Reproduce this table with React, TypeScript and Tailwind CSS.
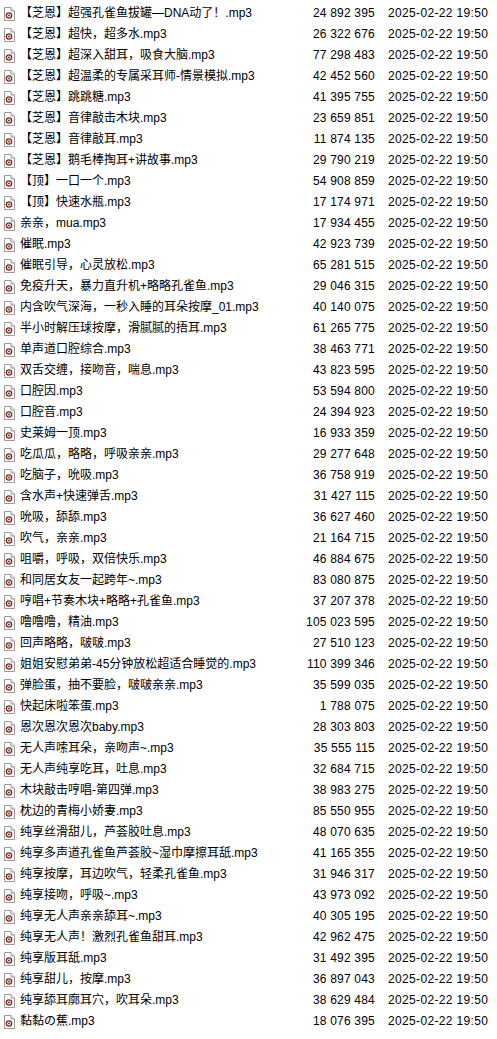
import React from "react";

const files: [string, string][] = [
  ["【芝恩】超强孔雀鱼拔罐—DNA动了！.mp3", "24 892 395"],
  ["【芝恩】超快，超多水.mp3", "26 322 676"],
  ["【芝恩】超深入甜耳，吸食大脑.mp3", "77 298 483"],
  ["【芝恩】超温柔的专属采耳师-情景模拟.mp3", "42 452 560"],
  ["【芝恩】跳跳糖.mp3", "41 395 755"],
  ["【芝恩】音律敲击木块.mp3", "23 659 851"],
  ["【芝恩】音律敲耳.mp3", "11 874 135"],
  ["【芝恩】鹅毛棒掏耳+讲故事.mp3", "29 790 219"],
  ["【顶】一口一个.mp3", "54 908 859"],
  ["【顶】快速水瓶.mp3", "17 174 971"],
  ["亲亲，mua.mp3", "17 934 455"],
  ["催眠.mp3", "42 923 739"],
  ["催眠引导，心灵放松.mp3", "65 281 515"],
  ["免疫升天，暴力直升机+略略孔雀鱼.mp3", "29 046 315"],
  ["内含吹气深海，一秒入睡的耳朵按摩_01.mp3", "40 140 075"],
  ["半小时解压球按摩，滑腻腻的捂耳.mp3", "61 265 775"],
  ["单声道口腔综合.mp3", "38 463 771"],
  ["双舌交缠，接吻音，喘息.mp3", "43 823 595"],
  ["口腔因.mp3", "53 594 800"],
  ["口腔音.mp3", "24 394 923"],
  ["史莱姆一顶.mp3", "16 933 359"],
  ["吃瓜瓜，略略，呼吸亲亲.mp3", "29 277 648"],
  ["吃脑子，吮吸.mp3", "36 758 919"],
  ["含水声+快速弹舌.mp3", "31 427 115"],
  ["吮吸，舔舔.mp3", "36 627 460"],
  ["吹气，亲亲.mp3", "21 164 715"],
  ["咀嚼，呼吸，双倍快乐.mp3", "46 884 675"],
  ["和同居女友一起跨年~.mp3", "83 080 875"],
  ["哼唱+节奏木块+略略+孔雀鱼.mp3", "37 207 378"],
  ["噜噜噜，精油.mp3", "105 023 595"],
  ["回声略略，啵啵.mp3", "27 510 123"],
  ["姐姐安慰弟弟-45分钟放松超适合睡觉的.mp3", "110 399 346"],
  ["弹脸蛋，抽不要脸，啵啵亲亲.mp3", "35 599 035"],
  ["快起床啦笨蛋.mp3", "1 788 075"],
  ["恩次恩次恩次baby.mp3", "28 303 803"],
  ["无人声嗦耳朵，亲吻声~.mp3", "35 555 115"],
  ["无人声纯享吃耳，吐息.mp3", "32 684 715"],
  ["木块敲击哼唱-第四弹.mp3", "38 983 275"],
  ["枕边的青梅小娇妻.mp3", "85 550 955"],
  ["纯享丝滑甜儿，芦荟胶吐息.mp3", "48 070 635"],
  ["纯享多声道孔雀鱼芦荟胶~湿巾摩擦耳舐.mp3", "41 165 355"],
  ["纯享按摩，耳边吹气，轻柔孔雀鱼.mp3", "31 946 317"],
  ["纯享接吻，呼吸~.mp3", "43 973 092"],
  ["纯享无人声亲亲舔耳~.mp3", "40 305 195"],
  ["纯享无人声！激烈孔雀鱼甜耳.mp3", "42 962 475"],
  ["纯享版耳舐.mp3", "31 492 395"],
  ["纯享甜儿，按摩.mp3", "36 897 043"],
  ["纯享舔耳廓耳穴，吹耳朵.mp3", "38 629 484"],
  ["黏黏の蕉.mp3", "18 076 395"],
];

// media file icon: page with folded corner and a reddish disc
function AudioIcon() {
  return (
    <svg width="11" height="14" viewBox="0 0 11 14" className="shrink-0">
      <path d="M0.5 0.5 H7 L10.5 4 V13.5 H0.5 Z" fill="#fff" stroke="#9a9a9a" />
      <path d="M7 0.5 V4 H10.5" fill="#eee" stroke="#9a9a9a" />
      <circle cx="5" cy="8.5" r="3.3" fill="#7a2a1c" />
      <circle cx="5" cy="8.5" r="1.9" fill="#fff" />
      <circle cx="5" cy="8.5" r="0.9" fill="#5a1a10" />
    </svg>
  );
}

export default function App() {
  return (
    <div
      className="w-[497px] min-h-[1039px] bg-white pt-[3px] text-[12px] text-black"
      style={{ fontFamily: '"Liberation Sans", "Noto Sans CJK SC", sans-serif' }}
    >
      {files.map(([name, size]) => (
        <div key={name} className="flex h-[21px] items-center leading-[21px]">
          <div className="flex w-[20px] pl-[4px]">
            <AudioIcon />
          </div>
          <div className="w-[280px] truncate">{name}</div>
          <div className="w-[75px] text-right tracking-[0.2px]">{size}</div>
          <div className="pl-[13px] tracking-[0.35px]">2025-02-22 19:50</div>
        </div>
      ))}
    </div>
  );
}
